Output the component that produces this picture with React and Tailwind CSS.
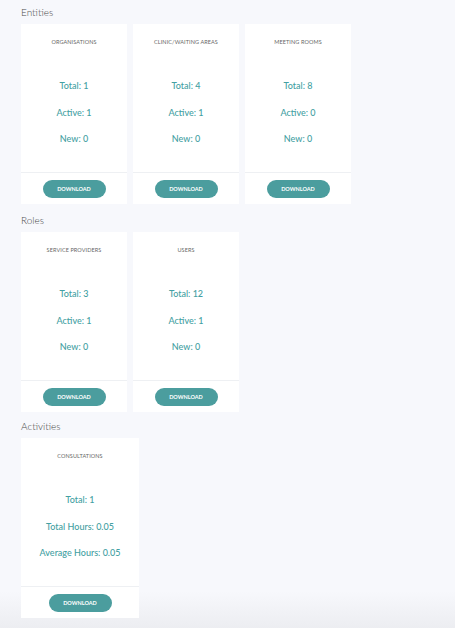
import React from 'react';

const sections = [
  {
    title: 'Entities',
    gap: 'mb-[9px]',
    cards: [
      { name: 'Organisations', stats: ['Total: 1', 'Active: 1', 'New: 0'] },
      { name: 'Clinic/Waiting Areas', stats: ['Total: 4', 'Active: 1', 'New: 0'] },
      { name: 'Meeting Rooms', stats: ['Total: 8', 'Active: 0', 'New: 0'] },
    ],
  },
  {
    title: 'Roles',
    gap: 'mb-[7px]',
    cards: [
      { name: 'Service Providers', stats: ['Total: 3', 'Active: 1', 'New: 0'] },
      { name: 'Users', stats: ['Total: 12', 'Active: 1', 'New: 0'] },
    ],
  },
  {
    title: 'Activities',
    gap: 'mb-0',
    wide: true,
    cards: [
      { name: 'Consultations', stats: ['Total: 1', 'Total Hours: 0.05', 'Average Hours: 0.05'] },
    ],
  },
];

const StatCard = ({ card, wide }) => (
  <div className={`${wide ? 'w-[118px]' : 'w-[106px]'} h-[180px] bg-white flex flex-col`}>
    <div className="h-[148px] flex flex-col items-center pt-[15px]">
      <div className="text-[5.5px] leading-[6px] uppercase text-[#666] tracking-[0.1px]">{card.name}</div>
      <div className="mt-[35px] flex flex-col items-center gap-[14.5px]">
        {card.stats.map((s) => (
          <div key={s} className="text-[9px] leading-[12px] font-medium text-[#43a0a2]">
            {s}
          </div>
        ))}
      </div>
    </div>
    <div className="border-t border-[#eef0f3] flex justify-center pt-[7px]">
      <button className="w-[63px] h-[18px] rounded-full bg-[#4b9d9e] text-white text-[5.5px] font-bold uppercase">
        Download
      </button>
    </div>
  </div>
);

const App = () => {
  return (
    <div
      className="min-h-[628px] bg-[linear-gradient(to_bottom,#f7f8fc_94%,#ecedf1)] pl-[21px] pt-[5px] pb-[11px]"
      style={{ fontFamily: 'Lato, "Open Sans", sans-serif' }}
    >
      {sections.map((section) => (
        <div key={section.title} className={section.gap}>
          <h2 className="text-[10px] leading-[14px] font-light text-[#4a4a4a] mb-[5px]">{section.title}</h2>
          <div className="flex gap-[6px]">
            {section.cards.map((card) => (
              <StatCard key={card.name} card={card} wide={section.wide} />
            ))}
          </div>
        </div>
      ))}
    </div>
  );
};

export default App;
